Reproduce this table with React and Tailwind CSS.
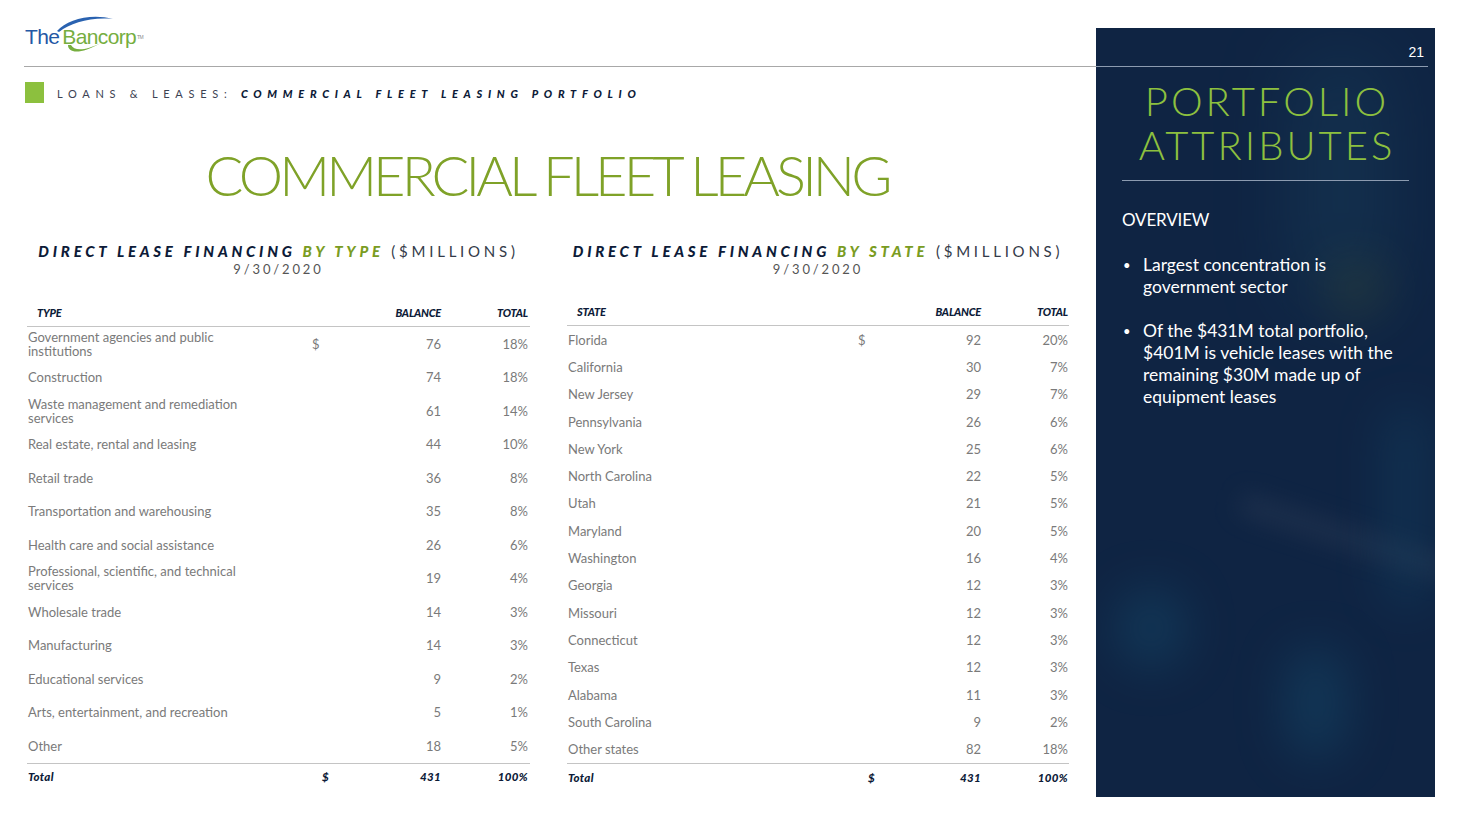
import React from "react";

const typeRows = [
  ["Government agencies and public institutions", true, 76, "18%"],
  ["Construction", false, 74, "18%"],
  ["Waste management and remediation services", false, 61, "14%"],
  ["Real estate, rental and leasing", false, 44, "10%"],
  ["Retail trade", false, 36, "8%"],
  ["Transportation and warehousing", false, 35, "8%"],
  ["Health care and social assistance", false, 26, "6%"],
  ["Professional, scientific, and technical services", false, 19, "4%"],
  ["Wholesale trade", false, 14, "3%"],
  ["Manufacturing", false, 14, "3%"],
  ["Educational services", false, 9, "2%"],
  ["Arts, entertainment, and recreation", false, 5, "1%"],
  ["Other", false, 18, "5%"],
];

const stateRows = [
  ["Florida", true, 92, "20%"],
  ["California", false, 30, "7%"],
  ["New Jersey", false, 29, "7%"],
  ["Pennsylvania", false, 26, "6%"],
  ["New York", false, 25, "6%"],
  ["North Carolina", false, 22, "5%"],
  ["Utah", false, 21, "5%"],
  ["Maryland", false, 20, "5%"],
  ["Washington", false, 16, "4%"],
  ["Georgia", false, 12, "3%"],
  ["Missouri", false, 12, "3%"],
  ["Connecticut", false, 12, "3%"],
  ["Texas", false, 12, "3%"],
  ["Alabama", false, 11, "3%"],
  ["South Carolina", false, 9, "2%"],
  ["Other states", false, 82, "18%"],
];

const Logo = () => {
  return (
    <div className="relative ml-[25px] mt-[23px] h-[28px] w-[125px]">
      <div className="relative z-[1] text-[21px] leading-[28px] tracking-[-0.03em] font-['Liberation_Sans',Arial,sans-serif]">
        <span className="text-[#2458a5]">The</span>
        <span className="text-[#76ae3f] ml-[3px]">Bancorp</span>
        <span className="text-[#8a8a8a] text-[5px] align-top ml-[1px]">TM</span>
      </div>
      {/* swooshes, drawn in page coordinates */}
      <svg className="absolute left-0 top-[-23px]" width="125" height="60" viewBox="25 0 125 60">
        <path d="M57 31 C 67 20, 90 13, 113 19 C 90 17, 71 23, 59 32 Z" fill="#2a62b0" />
        <path d="M68 45 C 68 53, 80 55, 101 43 C 85 51, 74 51, 71 45 Z" fill="#76ae3f" />
      </svg>
    </div>
  );
};

const DataTable = ({ label, rows, rowH, cols }) => {
  return (
    <div className="font-['Lato',sans-serif]">
      <div className={`grid ${cols} items-end h-[26px] pb-[5px] border-b border-[#c4c4c4] text-[11px] font-black italic text-[#0d1b38] tracking-[-0.02em]`}>
        <div className="pl-[10px]">{label}</div>
        <div />
        <div className="text-right">BALANCE</div>
        <div className="text-right">TOTAL</div>
      </div>
      {rows.map(([name, dollar, bal, pct]) => (
        <div key={name} className={`grid ${cols} items-center ${rowH} text-[13px] leading-[14px] text-[#7a7a7a]`}>
          <div className="pl-[1px] max-w-[222px]">{name}</div>
          <div>{dollar ? "$" : ""}</div>
          <div className="text-right">{bal}</div>
          <div className="text-right">{pct}</div>
        </div>
      ))}
      <div className={`grid ${cols} items-center h-[28px] border-t border-[#c4c4c4] text-[11.5px] font-black italic text-[#0d1b38] tracking-[0.03em]`}>
        <div className="pl-[1px]">Total</div>
        <div className="pl-[10px]">$</div>
        <div className="text-right">431</div>
        <div className="text-right">100%</div>
      </div>
    </div>
  );
};

const TableTitle = ({ by }) => {
  return (
    <div className="text-center font-['Lato',sans-serif] text-[#0d1b38]">
      <div className="text-[15px] leading-[18px] tracking-[0.25em] whitespace-nowrap">
        <span className="font-black italic">DIRECT LEASE FINANCING </span>
        <span className="font-black italic text-[#7a9c22]">{by}</span>
        <span className="font-normal text-[#333a48]"> ($MILLIONS)</span>
      </div>
      <div className="mt-[1px] text-[13px] leading-[16px] tracking-[0.22em] text-[#555]">9/30/2020</div>
    </div>
  );
};

const Panel = () => {
  return (
    <div className="relative mt-[28px] w-[339px] h-[769px] bg-[#0f2443] overflow-hidden font-['Lato',sans-serif]">
      {/* soft blurred background shapes */}
      <div className="absolute left-[200px] top-[20px] w-[90px] h-[260px] rounded-full bg-[#1b4560] opacity-40 blur-2xl" />
      <div className="absolute left-[20px] top-[560px] w-[70px] h-[80px] rounded-full bg-[#15496a] opacity-50 blur-xl" />
      <div className="absolute left-[190px] top-[620px] w-[60px] h-[110px] rounded-full bg-[#15496a] opacity-50 blur-xl" />
      <div className="absolute left-[140px] top-[500px] w-[220px] h-[18px] rotate-[18deg] bg-[#2a3a55] opacity-60 blur-md" />
      <div className="absolute left-[290px] top-[380px] w-[40px] h-[200px] rounded-full bg-[#15496a] opacity-40 blur-xl" />
      <div className="absolute left-[230px] top-[230px] w-[60px] h-[60px] rounded-full bg-[#3a4a30] opacity-40 blur-xl" />

      <div className="relative">
        <div className="h-[38px] flex items-end justify-end pr-[11px] pb-[6px] text-[14px] leading-[16px] text-white font-['Liberation_Sans',Arial,sans-serif]">21</div>
        <div className="h-px w-[332px] bg-[#8c9bb0]" />
        <div className="mt-[12px] text-center text-[#8dc03f] font-light text-[40px] leading-[44px] tracking-[0.075em] pl-[3px]">
          <div>PORTFOLIO</div>
          <div>ATTRIBUTES</div>
        </div>
        <div className="mt-[13px] mx-[26px] h-px bg-[#8c9bb0]" />
        <div className="mt-[29px] ml-[26px] text-white text-[17px] leading-[20px] tracking-[-0.01em]">OVERVIEW</div>
        <ul className="mt-[24px] ml-[27px] w-[286px] text-white text-[17.5px] leading-[22px] flex flex-col gap-[22px]">
          <li className="flex">
            <span className="w-[20px] shrink-0 text-[13px]">•</span>
            <span>Largest concentration is government sector</span>
          </li>
          <li className="flex">
            <span className="w-[20px] shrink-0 text-[13px]">•</span>
            <span>Of the $431M total portfolio, $401M is vehicle leases with the remaining $30M made up of equipment leases</span>
          </li>
        </ul>
      </div>
    </div>
  );
};

export default function App() {
  return (
    <div className="w-[1462px] h-[823px] bg-white flex overflow-hidden">
      <div className="w-[1096px] shrink-0 flex flex-col">
        <Logo />
        <div className="mt-[15px] ml-[24px] h-px bg-[#a8a8a8]" />
        <div className="mt-[15px] ml-[25px] flex items-center h-[21px]">
          <div className="w-[19px] h-[21px] bg-[#8cc03e]" />
          <div className="ml-[13px] mt-[3px] text-[11px] tracking-[0.52em] whitespace-nowrap font-['Lato',sans-serif]">
            <span className="text-[#3b4252]">LOANS &amp; LEASES: </span>
            <span className="font-black italic text-[#0d1b38]">COMMERCIAL FLEET LEASING PORTFOLIO</span>
          </div>
        </div>
        <div className="mt-[44px] text-center text-[#7fa228] font-light text-[56px] leading-[56px] tracking-[-0.07em] font-['Lato',sans-serif] pr-[2px]">
          COMMERCIAL FLEET LEASING
        </div>
        <div className="mt-[39px] flex">
          <div className="ml-[27px] w-[503px]">
            <TableTitle by="BY TYPE" />
            <div className="mt-[24px]">
              <DataTable
                label="TYPE"
                rows={typeRows}
                rowH="h-[33.5px]"
                cols="grid-cols-[285px_30px_99px_87px]"
              />
            </div>
          </div>
          <div className="ml-[37px] w-[502px]">
            <TableTitle by="BY STATE" />
            <div className="mt-[23px]">
              <DataTable
                label="STATE"
                rows={stateRows}
                rowH="h-[27.3px]"
                cols="grid-cols-[291px_30px_93px_87px]"
              />
            </div>
          </div>
        </div>
      </div>
      <Panel />
    </div>
  );
}
